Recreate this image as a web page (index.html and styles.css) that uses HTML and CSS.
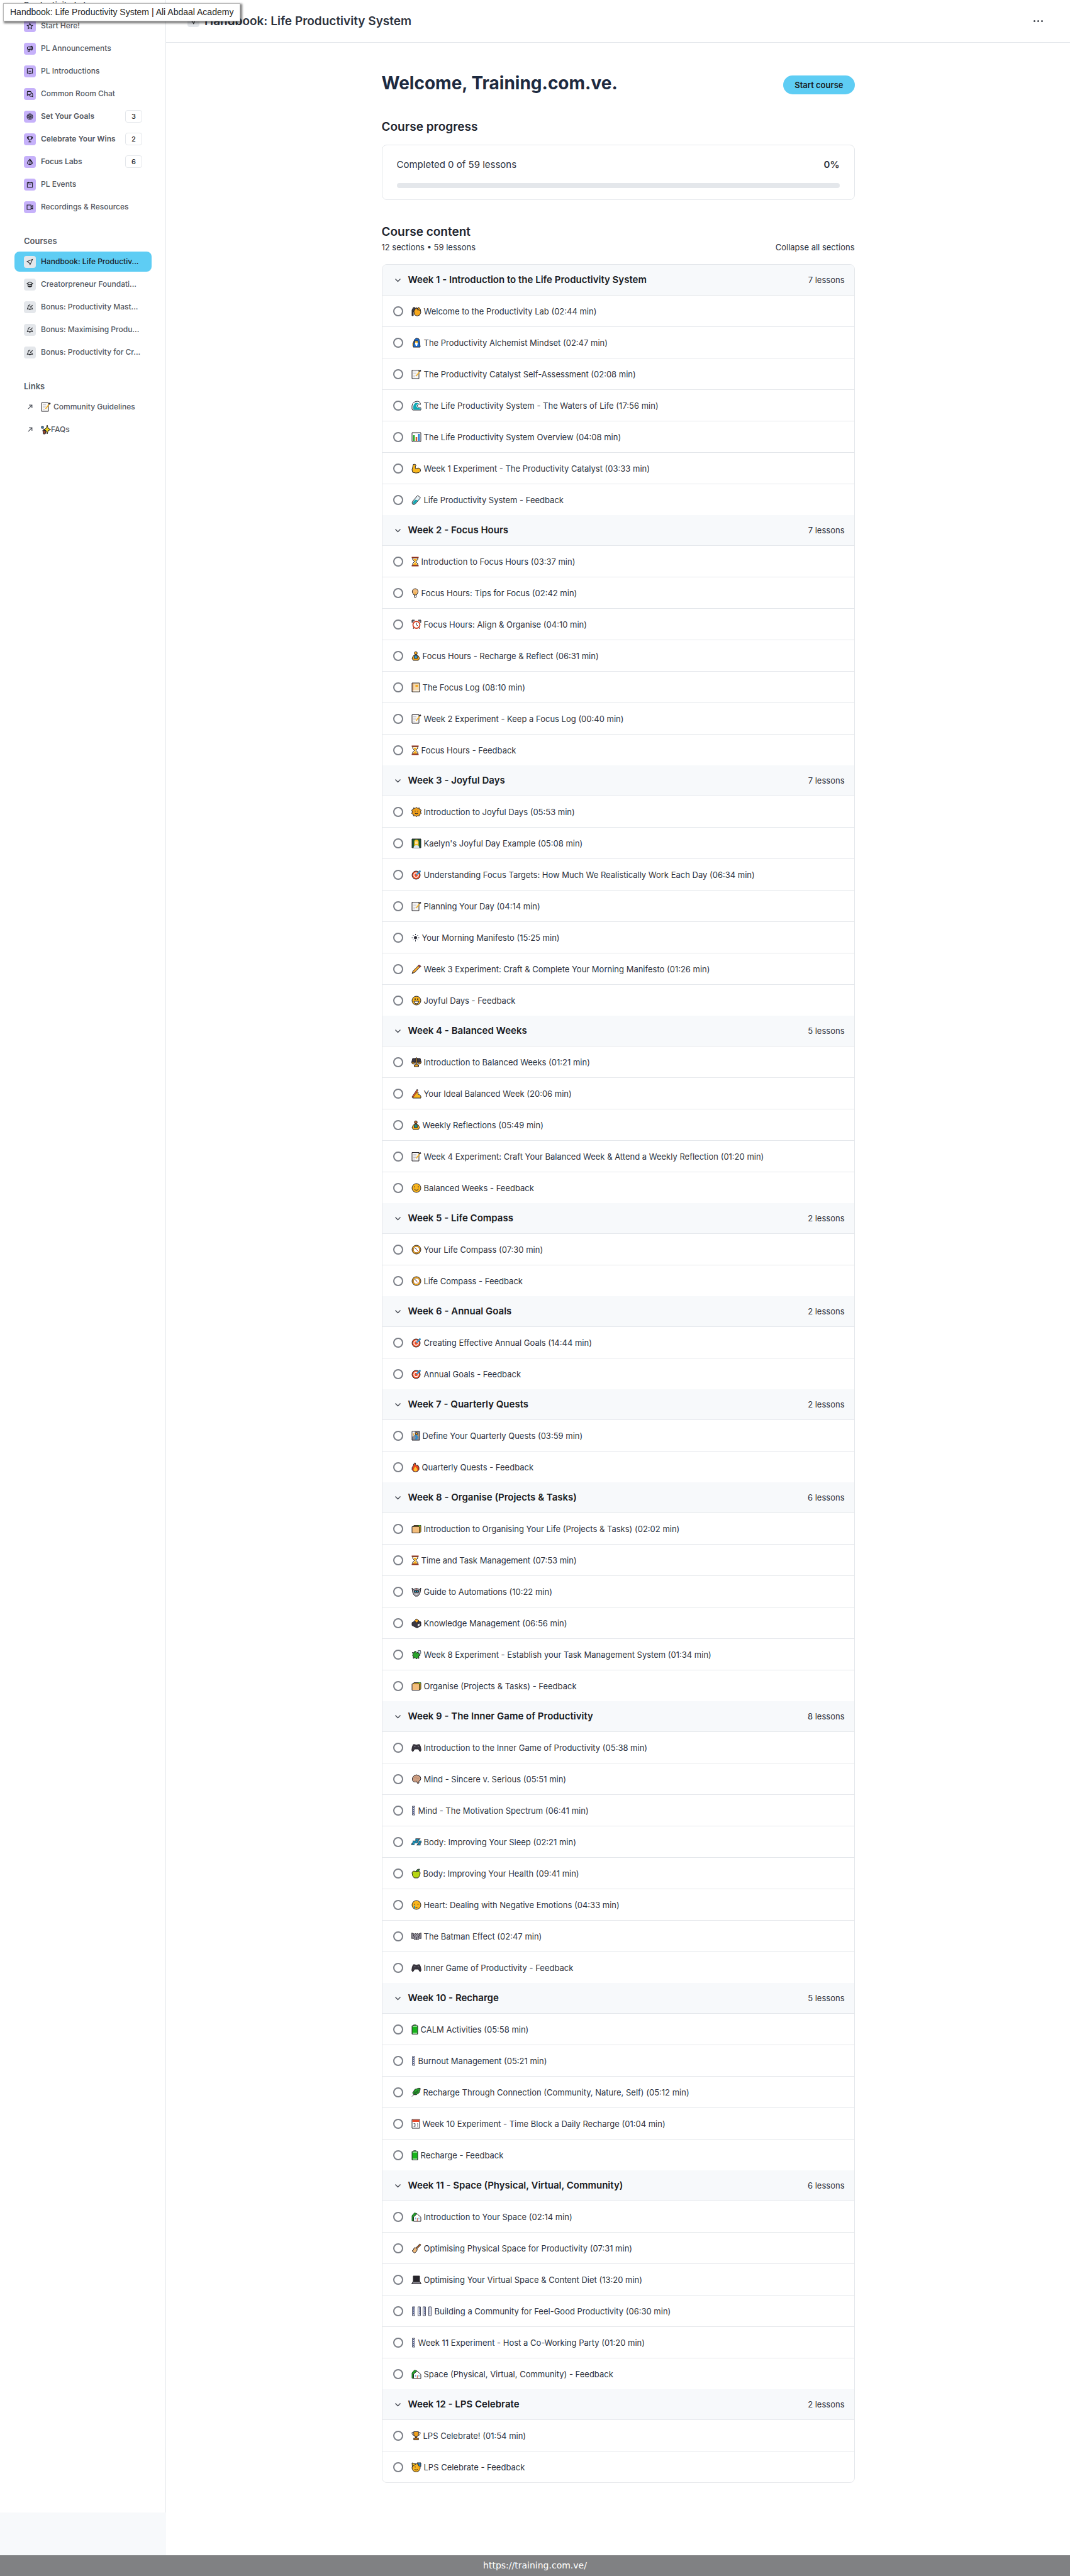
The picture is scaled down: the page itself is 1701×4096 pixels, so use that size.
FILE: index.html
```html
<!DOCTYPE html>
<html lang="en">
<head>
<meta charset="utf-8">
<title>Handbook: Life Productivity System | Ali Abdaal Academy</title>
<link rel="stylesheet" href="styles.css">
</head>
<body>
<svg class="sprite" aria-hidden="true">
<symbol id="i-star" viewBox="0 0 16 16"><path d="M8 1.800l1.900 4 4.300.6-3.100 3 .8 4.400L8 11.700l-3.900 2.100.8-4.400-3.100-3 4.300-.6z"/></symbol>
<symbol id="i-mega" viewBox="0 0 16 16"><path d="M8.500 3.500H5a3 3 0 000 6h3.500zM8.500 3.500l3-1.700q2.500.2 2.500 4.700t-2.500 4.700l-3-1.700M4 9.700v4h3v-4M11.500 2v9"/></symbol>
<symbol id="i-note" viewBox="0 0 16 16"><path d="M2 2h12v10H9.500L8 14l-1.500-2H2zM5 7.500h6"/></symbol>
<symbol id="i-chat" viewBox="0 0 16 16"><path d="M3 2h5q3 0 3 3t-3 4.500H5L2 11V4q0-2 1-2zM11.500 5.500q3 .5 3 3.500v5l-2.500-1H9q-2.500 0-3-3"/></symbol>
<symbol id="i-target" viewBox="0 0 16 16"><circle cx="8" cy="8" r="6.500"/><circle cx="8" cy="8" r="4"/><circle cx="8" cy="8" r="1.500"/></symbol>
<symbol id="i-cup" viewBox="0 0 16 16"><path d="M4.500 1.500h7V6q0 3.500-3.500 3.500T4.500 6zM4.500 3H2q0 4 3 4.500M11.500 3H14q0 4-3 4.500M8 9.500v4M5 14h6"/></symbol>
<symbol id="i-lab" viewBox="0 0 16 16"><path d="M8 1.500L3.500 7 2 11q2 3 6 3t6-3l-1.500-4zM8 1.500V14M8 3l2.500 4v7"/></symbol>
<symbol id="i-cal" viewBox="0 0 16 16"><path d="M2 3.500h12V14H2zM5 1.500v3.500M11 1.500v3.500M5 7h6"/></symbol>
<symbol id="i-video" viewBox="0 0 16 16"><path d="M1.500 3h9v10h-9zM10.500 7l4-3v8l-4-3z"/></symbol>
<symbol id="i-plane" viewBox="0 0 16 16"><path d="M14 2L1.500 7l4.500 2.500L8.500 14z"/></symbol>
<symbol id="i-grad" viewBox="0 0 16 16"><path d="M8 2L1.500 5.500 8 9l6.500-3.500zM3.500 7v4.500Q8 15.500 12.500 11.500V7M5 11q3 2.500 6 0"/></symbol>
<symbol id="i-bell" viewBox="0 0 16 16"><path d="M9 2.500Q4 2.500 4 7.500L2 12h12l-1.500-3.500M6.500 12.500Q8 15 9.500 12.500M8 6l2 2 4-5"/></symbol>
<symbol id="i-out" viewBox="0 0 16 16"><path d="M3 13L12 4M5 3.500h7.500V11"/></symbol>
<symbol id="i-chev" viewBox="0 0 15 15"><path d="M3.500 5.500l4 4 4-4"/></symbol>

<symbol id="clap" viewBox="0 0 16 16"><path fill="#3d3d45" d="M3 2h3v3L3 9v6H1V6z"/><path fill="#f7a81b" d="M4 8l3-5 1.500-1L10 4l1.500-2.500L14 4l1 6-2 4-4 1.500-4-2z"/><path d="M8 3l3 4M10 3l3 4"/></symbol>
<symbol id="mage" viewBox="0 0 16 16"><path fill="#1b6ed1" d="M3 15V8l2-5 3-2.500L12 2l1 4 1 9z"/><path fill="#ffc83d" d="M5.500 5h5v4h-5z"/><path fill="#fff" stroke="none" d="M5.500 8h5l-1.500 5H7z"/><path stroke="#f7a81b" d="M2 8v5"/></symbol>
<symbol id="memo" viewBox="0 0 16 16"><path fill="#f8f7f5" d="M1 1.500h11v13.500H1z"/><path stroke="#c4c1c9" d="M3 4.500h5M3 7h5M3 9.500h4M3 12h3"/><path stroke="#f0b02c" stroke-width="1.800" d="M7.500 11L13 4"/><path stroke-width="2.400" d="M12.500 3.500L15 2"/></symbol>
<symbol id="wave" viewBox="0 0 16 16"><path fill="#fff" d="M1 13Q-.5 2 9 1q5 0 5.500 5-4-1.500-5 2 0 3 5.500 3.500V15H2z"/><path fill="#10a9b5" stroke="none" d="M3 13q-1-7 4-9.500Q11 3 12 5q-4 0-4 4 1 3 6.500 3.500v2H4z"/></symbol>
<symbol id="chart" viewBox="0 0 16 16"><path fill="#fff" d="M1 1h14v14H1z"/><path stroke="#18a51c" stroke-width="2.500" d="M4 14V5"/><path stroke="#d05b24" stroke-width="2.500" d="M8 14V8"/><path stroke="#1b77d2" stroke-width="2.500" d="M12 14V3"/></symbol>
<symbol id="arm" viewBox="0 0 16 16"><path fill="#f9b81e" d="M3 1.500q3-1 4.500 1L6 5.500l1 3q4-3 7 0 2 4-2 6-5 1.500-10-.5-2-4 0-8z"/></symbol>
<symbol id="tube" viewBox="0 0 16 16"><path fill="#e7f3f8" d="M10 .8l4.500 3.700-8 9.500q-2.500 2.500-4.500.8t0-4.800z"/><path fill="#12a5b0" stroke="none" d="M6 7.500l4.500 1-4.500 5q-2 1.500-3.200.5-.8-2 .7-4z"/></symbol>
<symbol id="glass" viewBox="0 0 12 16"><path fill="#fff5dc" d="M2 2h8v3L7 8l3 3v3H2v-3l3-3-3-3z"/><path fill="#f9b11b" stroke="none" d="M3 4h6L6.500 7.500v2L9 12v1.500H3V12l2.500-2.500v-2z"/><path stroke="#8c2e1a" stroke-width="2" d="M.5 1.500h11M.5 14.500h11"/></symbol>
<symbol id="bulb" viewBox="0 0 12 16"><path fill="#f3bd7b" d="M4 11L1.500 7q-1-5 4.500-6 5.500 1 4.500 6L8 11z"/><path fill="#fff" d="M4.500 11h3v3.500l-1.500 1-1.500-1z"/><path stroke="#f7a81b" d="M6 6v5"/></symbol>
<symbol id="alarm" viewBox="0 0 16 16"><path fill="#9a97a0" d="M1 5V1h4zM15 5V1h-4zM3 15l1-3M13 15l-1-3"/><circle cx="8" cy="8.500" r="5.500" fill="#fff" stroke="#d23d1d" stroke-width="1.800"/><path d="M8 5v3.500l2 1.500"/></symbol>
<symbol id="yoga" viewBox="0 0 14 16"><path fill="#f7a81b" d="M7 5L3 8l-2 4 2 3h8l2-3-2-4z"/><path fill="#2f9fd4" d="M5 7h4l.5 5h-5z"/><circle cx="7" cy="3.500" r="2.300" fill="#f7a81b"/></symbol>
<symbol id="yoga2" viewBox="0 0 14 16"><path fill="#f9b11b" d="M7 5L3 8l-2 4 2 3h8l2-3-2-4z"/><path fill="#17988c" d="M5 7h4l.5 5h-5z"/><circle cx="7" cy="3.500" r="2.300" fill="#c06a27"/></symbol>
<symbol id="book" viewBox="0 0 14 16"><path fill="#f6d9ab" d="M1 1h12v14H1z"/><path stroke="#b9531b" d="M2.500 1v12"/><path fill="#f9a81b" stroke="none" d="M6.500 4h4v3h-4z"/><path stroke="#fff" stroke-width="1.500" d="M3 13.500h9"/></symbol>
<symbol id="sunface" viewBox="0 0 16 16"><path fill="#f0a01c" d="M8 .5l2 2 2.500-1 .5 2.500 2.500 1-1 3 1 2.500-2.500 1.500-.5 2.500-2.500-.5L8 15.500l-2-1.500-2.500.5L3 12 .5 10.500l1-2.500-1-3L3 4l.5-2.500 2.500 1z"/><path d="M6 6v1.500M10 6v1.500M5.500 10q2.500 2 5 0"/></symbol>
<symbol id="teacher" viewBox="0 0 16 16"><path fill="#1d5a33" d="M1 1h14v14H1z"/><path fill="#f9c51e" stroke="none" d="M4.500 12V5Q5 2 8 2t3.500 3v7z"/><path fill="#ffe0a8" stroke="none" d="M6 5h4v4H6z"/><path fill="#dbe9f6" stroke="none" d="M3.500 15q0-4 4.500-4t4.500 4z"/></symbol>
<symbol id="dart" viewBox="0 0 16 16"><circle cx="7.500" cy="8.500" r="6.500" fill="#ef4b22"/><circle cx="7.500" cy="8.500" r="3.500" fill="none" stroke="#fff" stroke-width="1.600"/><path stroke="#27242b" stroke-width="2.600" d="M10.500 5.500L14 2"/><path stroke="#2d9fe0" stroke-width="1.800" d="M8 8l6.500-6.500"/></symbol>
<symbol id="sun" viewBox="0 0 13 16"><g stroke="#3c4250"><circle cx="6.500" cy="8" r="2.200" fill="#27242b"/><path d="M6.500 2v2M6.500 12v2M.5 8h2M10.500 8h2M2.500 4l1 1M9.500 11l1 1M2.500 12l1-1M9.500 5l1-1"/></g></symbol>
<symbol id="pencil" viewBox="0 0 16 16"><path fill="#f3a62b" d="M1 15l1.500-4L12 1.500l2.500 2L5.500 13z"/><path fill="#d33f4e" d="M11 2.500L12.500 1 15 3.500 13.500 5z"/></symbol>
<symbol id="grin" viewBox="0 0 16 16"><circle cx="8" cy="8" r="7" fill="#f9b51e"/><path stroke-width="1.500" d="M6 4.500v2.500M10 4.500v2.500"/><path fill="#fff" d="M4 9h8q-.5 4-4 4T4 9z"/></symbol>
<symbol id="smile" viewBox="0 0 16 16"><circle cx="8" cy="8" r="7" fill="#f9b51e"/><path d="M4 6.500q1-1.500 2 0M10 6.500q1-1.500 2 0M4.500 9.500q3.500 4 7 0"/></symbol>
<symbol id="scale" viewBox="0 0 16 16"><path fill="#3b3842" d="M2 2h12l1.500 6H.5z"/><path fill="#f7a81b" d="M.5 8h5q-.5 3-2.500 3T.5 8zM10.500 8h5q-.5 3-2.500 3t-2.500-3zM7 1h2v11h2.500v3h-7v-3H7z"/></symbol>
<symbol id="write" viewBox="0 0 16 16"><path fill="#f9b51e" d="M2 14l2-5 3-1 2-3 2 1-.5 3 3 1 1.500 2v3H2z"/><path stroke="#27242b" stroke-width="2.600" d="M1.500 14L10 1.500"/><path stroke="#e2552b" stroke-width="1.600" d="M2 13.500L9.500 2.500"/></symbol>
<symbol id="compass" viewBox="0 0 16 16"><circle cx="8" cy="8" r="7" fill="#f5a81c"/><circle cx="8" cy="8" r="4.800" fill="#fff" stroke="#a9752b"/><path d="M5.500 5.500l3 2"/><path stroke="#d33f26" d="M8 8l2.500 2.500"/></symbol>
<symbol id="climb" viewBox="0 0 14 16"><path fill="#8f8d96" d="M1 1h12v14H1z"/><path fill="#f4f4f4" stroke="none" d="M1.500 1.500h4v5l-4 3z"/><path stroke="#2d8ed0" stroke-width="3" d="M6 7l3 3-2 4"/><circle cx="8" cy="4.500" r="1.800" fill="#f7a81b"/><path stroke="#f7a81b" d="M4 8l-1-4M10 9l2-3"/></symbol>
<symbol id="fire" viewBox="0 0 13 16"><path fill="#e9481f" d="M6 .8q0 3 3 5l1-1.500q3 4 2 7.500-1.500 3.500-5.500 3.500T1 11.500Q.5 8 3 5.500q0-3 3-4.700z"/><path fill="#ffc22d" stroke="none" d="M6 7q3 2.500 3.500 5-.5 2.500-3 2.500T3.500 12Q4 10 6 7z"/></symbol>
<symbol id="files" viewBox="0 0 16 16"><path fill="#f5c11e" d="M2 4.500l2-2h11v10l-2 2z"/><path fill="#29a329" stroke="none" d="M11.500 2h3v1.500h-3z"/><path fill="#f3bd7b" d="M1 4.500h11.500v10H1z"/></symbol>
<symbol id="robot" viewBox="0 0 16 16"><path fill="#a4a4ad" d="M1 2l2 2.500q5-3.500 10 0L15 2l-1 7-2 4-2 2H6l-2-2-2-4z"/><path fill="#26343d" d="M4.500 6h7v3h-7z"/><path stroke="#23b4d9" d="M5.500 7.500h1.500M9 7.500h1.500"/><path stroke="#d33f26" d="M8 3v2"/><path stroke="#fff" d="M6.500 12h3"/></symbol>
<symbol id="ballot" viewBox="0 0 16 16"><path fill="#3b3842" d="M1 7l7-3.500L15 6v6l-6 3.500-8-4z"/><path fill="#f7a81b" d="M5 4l3-3 4 3-4 3.500z"/><path fill="#f4f4f4" stroke="none" d="M10 10l3-1.500v3L10 13z"/></symbol>
<symbol id="puzzle" viewBox="0 0 16 16"><path fill="#2aa52c" d="M1.500 4.500l3 .5q0-3 2-2.500T8 6l2.500-2.500L12 7q2 0 2 1.500t-2.500 1.500l.5 4-2.500-.5L8 15l-2-2.500-3 1.500v-4Q0 9 3 7.500z"/><path fill="#bfe1f3" stroke-width=".7" d="M10.500 1.500h4l.5 4.500-2 .5-2-2z"/></symbol>
<symbol id="pad" viewBox="0 0 16 16"><path fill="#3b3842" d="M3 3h3l1 .8h2l1-.8h3q2 3 2.300 9-.8 3-2.300 1.500L11 10H5l-2 3.500Q1.500 15 .7 12 1 6 3 3z"/><path stroke="#8a8792" d="M4 6.500h2.500M10 6.500h2"/></symbol>
<symbol id="brain" viewBox="0 0 16 16"><path fill="#cfa083" d="M5 2q3-2 6 0 4 1 4 5-.5 4-3 4v3l-2 1-1.500-3Q4 13.500 2 10.500q-2-5 3-8.500z"/><path stroke="#b98a70" d="M4 6q3-2 4 0t4 0M4 9.500h5"/></symbol>
<symbol id="tofu" viewBox="0 0 7 16"><path fill="#e8e9f2" stroke="#4c5064" d="M1.500 1h4v14h-4z"/><path stroke="#3a4a86" stroke-dasharray="2 1" d="M3.500 2v12"/></symbol>
<symbol id="zzz" viewBox="0 0 16 16"><g stroke="#27242b" stroke-width="3.500"><path d="M2 7.500h3L2 11h3M6.500 4h4L6.500 8h4M11.500 7.500h3l-3 4h3"/></g><g stroke="#19a3cf" stroke-width="1.500"><path d="M2 7.500h3L2 11h3M6.500 4h4L6.500 8h4M11.500 7.500h3l-3 4h3"/></g></symbol>
<symbol id="apple" viewBox="0 0 15 16"><path fill="#b6d612" d="M7.500 5Q2 2.500 1 7q0 5 3.500 8h6Q14 12 14 7q-1-4.500-6.500-2z"/><path fill="#2aa52c" d="M7.500 4.500Q8 1 13 1q0 4-5.500 3.500z"/></symbol>
<symbol id="cry" viewBox="0 0 16 16"><circle cx="8" cy="8" r="7" fill="#f9b51e"/><path d="M5.500 6v2M10.500 6v2M6.500 12q1.500-1.500 3 0"/><path stroke="#1c97c4" stroke-width="2" d="M5 9.500v4"/></symbol>
<symbol id="bat" viewBox="0 0 16 16"><path fill="#96939e" d="M.7 2.500L5 4.500 6.500 3 8 5l1.500-2L11 4.500l4.300-2v9L13 10.500 11 13l-1.500-.5L8 14l-1.500-1.500L5 13l-2-2.500-2.300 1z"/><path d="M3 5l2 5M13 5l-2 5M6.500 7h.5M9 7h.5M8 9v3"/></symbol>
<symbol id="battery" viewBox="0 0 11 16"><path fill="#18b51b" d="M3.500.8h4V2H10v13.300H1V2h2.500z"/><path stroke="#fff" d="M2 3h7M2 14h7"/></symbol>
<symbol id="leaf" viewBox="0 0 16 16"><path fill="#25a52b" d="M3 11Q1 8 4 6q1-4 5-4 3-1.500 6-1 0 3-1 5 0 3-3 4-2 3-6 2z"/><path d="M1 15L12 4M6 9.500V6.500M8.500 7.500h3"/></symbol>
<symbol id="date" viewBox="0 0 14 16"><path fill="#fff" d="M1 1h12v14H1z"/><path fill="#e5492b" stroke="none" d="M1.500 1.500h11V5h-11z"/><path stroke="#77747e" d="M3.500 7.500H6v2.500H4M6 10v2.500H3.500M9 8l1-.5v5.500"/></symbol>
<symbol id="house" viewBox="0 0 16 16"><path fill="#25a52b" stroke="#1c5a24" d="M1 14.500V6l4-4.500L9 3v11.500z"/><path fill="#fff" d="M3.500 15V8L9 3l6 5.500V15z"/><path stroke="#7eb8e0" stroke-width="1.500" d="M6.500 9v3M12 9v3"/><path stroke="#c9472b" d="M9.300 15v-5"/></symbol>
<symbol id="broom" viewBox="0 0 16 16"><path stroke="#27242b" stroke-width="3" d="M8 8l6.500-6.500"/><path stroke="#c9722b" stroke-width="1.300" d="M8 8l6.500-6.500"/><path fill="#f3bd7b" d="M6 6.500L9.500 10 8 13l-3 2.500L1 12q3-1 3-4z"/></symbol>
<symbol id="laptop" viewBox="0 0 16 16"><path fill="#27242b" d="M3 2h10v9H3z"/><path fill="#8f8d96" d="M2.500 11h11l2 3.500H.5z"/></symbol>
<symbol id="trophy" viewBox="0 0 16 16"><path fill="#f0a01c" d="M4 1h8v5q-1 4-4 4T4 6z"/><path d="M4 2.500H1q0 5 4 5M12 2.500h3q0 5-4 5"/><path fill="#c97a18" d="M7 10h2v2h3v3H4v-3h3z"/></symbol>
<symbol id="party" viewBox="0 0 16 16"><circle cx="7.500" cy="9" r="6.500" fill="#f9b51e"/><path fill="#f5c11e" d="M1.500 7L1 1l6 2z"/><path d="M5 8q1-1 2 0M5 11.500q3 2 5 0"/><path fill="#2d8ed0" d="M9 1h6v6l-3-.5-1-3z"/><path stroke="#f7a81b" stroke-width="1.500" d="M9 10l5-3"/></symbol>
<symbol id="sparkle" viewBox="0 0 16 16"><path fill="#2d8ed0" d="M1 3h3v3H1zM3 6l3 3"/><path fill="#a04a2b" d="M3 9l5 1-1 5H4z"/><path fill="#e9d21a" d="M10 1l1.500 5 4 2-4 2-1.500 5-1.500-5-4-2 4-2z"/></symbol>
</svg>

<div class="page">
  <div class="shell">
    <aside class="sidebar">
      <nav class="nav">
        <section class="group">
          <h2 class="group-title">Productivity Lab</h2>
          <ul class="menu">
            <li><a class="item" href="#"><span class="tile lilac"><svg class="line"><use href="#i-star"/></svg></span>Start Here!</a></li>
            <li><a class="item" href="#"><span class="tile lilac"><svg class="line"><use href="#i-mega"/></svg></span>PL Announcements</a></li>
            <li><a class="item" href="#"><span class="tile lilac"><svg class="line"><use href="#i-note"/></svg></span>PL Introductions</a></li>
            <li><a class="item" href="#"><span class="tile lilac"><svg class="line"><use href="#i-chat"/></svg></span>Common Room Chat</a></li>
            <li><a class="item unread" href="#"><span class="tile lilac"><svg class="line"><use href="#i-target"/></svg></span>Set Your Goals<span class="count">3</span></a></li>
            <li><a class="item unread" href="#"><span class="tile lilac"><svg class="line"><use href="#i-cup"/></svg></span>Celebrate Your Wins<span class="count">2</span></a></li>
            <li><a class="item unread" href="#"><span class="tile lilac"><svg class="line"><use href="#i-lab"/></svg></span>Focus Labs<span class="count">6</span></a></li>
            <li><a class="item" href="#"><span class="tile lilac"><svg class="line"><use href="#i-cal"/></svg></span>PL Events</a></li>
            <li><a class="item" href="#"><span class="tile lilac"><svg class="line"><use href="#i-video"/></svg></span>Recordings &amp; Resources</a></li>
          </ul>
        </section>
        <section class="group">
          <h2 class="group-title">Courses</h2>
          <ul class="menu">
            <li><a class="item active" href="#"><span class="tile"><svg class="line"><use href="#i-plane"/></svg></span>Handbook: Life Productiv...</a></li>
            <li><a class="item" href="#"><span class="tile"><svg class="line"><use href="#i-grad"/></svg></span>Creatorpreneur Foundati...</a></li>
            <li><a class="item" href="#"><span class="tile"><svg class="line"><use href="#i-bell"/></svg></span>Bonus: Productivity Mast...</a></li>
            <li><a class="item" href="#"><span class="tile"><svg class="line"><use href="#i-bell"/></svg></span>Bonus: Maximising Produ...</a></li>
            <li><a class="item" href="#"><span class="tile"><svg class="line"><use href="#i-bell"/></svg></span>Bonus: Productivity for Cr...</a></li>
          </ul>
        </section>
        <section class="group">
          <h2 class="group-title">Links</h2>
          <ul class="menu">
            <li><a class="item" href="#"><span class="tile plain"><svg class="line out"><use href="#i-out"/></svg></span><svg class="emoji" width="16"><use href="#memo"/></svg>Community Guidelines</a></li>
            <li><a class="item" href="#"><span class="tile plain"><svg class="line out"><use href="#i-out"/></svg></span><svg class="emoji snug" width="16"><use href="#sparkle"/></svg>FAQs</a></li>
          </ul>
        </section>
      </nav>
      <div class="sidebar-foot"></div>
    </aside>

    <main class="main">
      <header class="topbar">
        <span class="tile"><svg class="line"><use href="#i-plane"/></svg></span>
        <h1 class="topbar-title">Handbook: Life Productivity System</h1>
        <button class="more" type="button" aria-label="More options"><i></i><i></i><i></i></button>
      </header>

      <div class="content">
        <div class="welcome">
          <h2 class="welcome-title">Welcome, Training.com.ve.</h2>
          <button class="start" type="button">Start course</button>
        </div>

        <h3 class="heading">Course progress</h3>
        <div class="progress-card">
          <div class="progress-row"><span>Completed 0 of 59 lessons</span><strong>0%</strong></div>
          <div class="bar" role="progressbar" aria-valuenow="0" aria-valuemin="0" aria-valuemax="100" aria-label="Course progress"></div>
        </div>

        <h3 class="heading">Course content</h3>
        <div class="summary"><span>12 sections • 59 lessons</span><button class="collapse" type="button">Collapse all sections</button></div>

        <div class="outline">
          <section class="week">
            <button class="week-head" type="button"><svg class="chev"><use href="#i-chev"/></svg><span class="week-name">Week 1 - Introduction to the Life Productivity System</span><span>7 lessons</span></button>
            <ul class="lessons">
              <li><label class="lesson"><input type="checkbox"><svg class="emoji" width="16"><use href="#clap"/></svg>Welcome to the Productivity Lab (02:44 min)</label></li>
              <li><label class="lesson"><input type="checkbox"><svg class="emoji" width="16"><use href="#mage"/></svg>The Productivity Alchemist Mindset (02:47 min)</label></li>
              <li><label class="lesson"><input type="checkbox"><svg class="emoji" width="16"><use href="#memo"/></svg>The Productivity Catalyst Self-Assessment (02:08 min)</label></li>
              <li><label class="lesson"><input type="checkbox"><svg class="emoji" width="16"><use href="#wave"/></svg>The Life Productivity System - The Waters of Life (17:56 min)</label></li>
              <li><label class="lesson"><input type="checkbox"><svg class="emoji" width="16"><use href="#chart"/></svg>The Life Productivity System Overview (04:08 min)</label></li>
              <li><label class="lesson"><input type="checkbox"><svg class="emoji" width="16"><use href="#arm"/></svg>Week 1 Experiment - The Productivity Catalyst (03:33 min)</label></li>
              <li><label class="lesson"><input type="checkbox"><svg class="emoji" width="16"><use href="#tube"/></svg>Life Productivity System - Feedback</label></li>
            </ul>
          </section>
          <section class="week">
            <button class="week-head" type="button"><svg class="chev"><use href="#i-chev"/></svg><span class="week-name">Week 2 - Focus Hours</span><span>7 lessons</span></button>
            <ul class="lessons">
              <li><label class="lesson"><input type="checkbox"><svg class="emoji" width="12"><use href="#glass"/></svg>Introduction to Focus Hours (03:37 min)</label></li>
              <li><label class="lesson"><input type="checkbox"><svg class="emoji" width="12"><use href="#bulb"/></svg>Focus Hours: Tips for Focus (02:42 min)</label></li>
              <li><label class="lesson"><input type="checkbox"><svg class="emoji" width="16"><use href="#alarm"/></svg>Focus Hours: Align &amp; Organise (04:10 min)</label></li>
              <li><label class="lesson"><input type="checkbox"><svg class="emoji" width="14"><use href="#yoga"/></svg>Focus Hours - Recharge &amp; Reflect (06:31 min)</label></li>
              <li><label class="lesson"><input type="checkbox"><svg class="emoji" width="14"><use href="#book"/></svg>The Focus Log (08:10 min)</label></li>
              <li><label class="lesson"><input type="checkbox"><svg class="emoji" width="16"><use href="#memo"/></svg>Week 2 Experiment - Keep a Focus Log (00:40 min)</label></li>
              <li><label class="lesson"><input type="checkbox"><svg class="emoji" width="12"><use href="#glass"/></svg>Focus Hours - Feedback</label></li>
            </ul>
          </section>
          <section class="week">
            <button class="week-head" type="button"><svg class="chev"><use href="#i-chev"/></svg><span class="week-name">Week 3 - Joyful Days</span><span>7 lessons</span></button>
            <ul class="lessons">
              <li><label class="lesson"><input type="checkbox"><svg class="emoji" width="16"><use href="#sunface"/></svg>Introduction to Joyful Days (05:53 min)</label></li>
              <li><label class="lesson"><input type="checkbox"><svg class="emoji" width="16"><use href="#teacher"/></svg>Kaelyn's Joyful Day Example (05:08 min)</label></li>
              <li><label class="lesson"><input type="checkbox"><svg class="emoji" width="16"><use href="#dart"/></svg>Understanding Focus Targets: How Much We Realistically Work Each Day (06:34 min)</label></li>
              <li><label class="lesson"><input type="checkbox"><svg class="emoji" width="16"><use href="#memo"/></svg>Planning Your Day (04:14 min)</label></li>
              <li><label class="lesson"><input type="checkbox"><svg class="emoji" width="13"><use href="#sun"/></svg>Your Morning Manifesto (15:25 min)</label></li>
              <li><label class="lesson"><input type="checkbox"><svg class="emoji" width="16"><use href="#pencil"/></svg>Week 3 Experiment: Craft &amp; Complete Your Morning Manifesto (01:26 min)</label></li>
              <li><label class="lesson"><input type="checkbox"><svg class="emoji" width="16"><use href="#grin"/></svg>Joyful Days - Feedback</label></li>
            </ul>
          </section>
          <section class="week">
            <button class="week-head" type="button"><svg class="chev"><use href="#i-chev"/></svg><span class="week-name">Week 4 - Balanced Weeks</span><span>5 lessons</span></button>
            <ul class="lessons">
              <li><label class="lesson"><input type="checkbox"><svg class="emoji" width="16"><use href="#scale"/></svg>Introduction to Balanced Weeks (01:21 min)</label></li>
              <li><label class="lesson"><input type="checkbox"><svg class="emoji" width="16"><use href="#write"/></svg>Your Ideal Balanced Week (20:06 min)</label></li>
              <li><label class="lesson"><input type="checkbox"><svg class="emoji" width="14"><use href="#yoga2"/></svg>Weekly Reflections (05:49 min)</label></li>
              <li><label class="lesson"><input type="checkbox"><svg class="emoji" width="16"><use href="#memo"/></svg>Week 4 Experiment: Craft Your Balanced Week &amp; Attend a Weekly Reflection (01:20 min)</label></li>
              <li><label class="lesson"><input type="checkbox"><svg class="emoji" width="16"><use href="#smile"/></svg>Balanced Weeks - Feedback</label></li>
            </ul>
          </section>
          <section class="week">
            <button class="week-head" type="button"><svg class="chev"><use href="#i-chev"/></svg><span class="week-name">Week 5 - Life Compass</span><span>2 lessons</span></button>
            <ul class="lessons">
              <li><label class="lesson"><input type="checkbox"><svg class="emoji" width="16"><use href="#compass"/></svg>Your Life Compass (07:30 min)</label></li>
              <li><label class="lesson"><input type="checkbox"><svg class="emoji" width="16"><use href="#compass"/></svg>Life Compass - Feedback</label></li>
            </ul>
          </section>
          <section class="week">
            <button class="week-head" type="button"><svg class="chev"><use href="#i-chev"/></svg><span class="week-name">Week 6 - Annual Goals</span><span>2 lessons</span></button>
            <ul class="lessons">
              <li><label class="lesson"><input type="checkbox"><svg class="emoji" width="16"><use href="#dart"/></svg>Creating Effective Annual Goals (14:44 min)</label></li>
              <li><label class="lesson"><input type="checkbox"><svg class="emoji" width="16"><use href="#dart"/></svg>Annual Goals - Feedback</label></li>
            </ul>
          </section>
          <section class="week">
            <button class="week-head" type="button"><svg class="chev"><use href="#i-chev"/></svg><span class="week-name">Week 7 - Quarterly Quests</span><span>2 lessons</span></button>
            <ul class="lessons">
              <li><label class="lesson"><input type="checkbox"><svg class="emoji" width="14"><use href="#climb"/></svg>Define Your Quarterly Quests (03:59 min)</label></li>
              <li><label class="lesson"><input type="checkbox"><svg class="emoji" width="13"><use href="#fire"/></svg>Quarterly Quests - Feedback</label></li>
            </ul>
          </section>
          <section class="week">
            <button class="week-head" type="button"><svg class="chev"><use href="#i-chev"/></svg><span class="week-name">Week 8 - Organise (Projects &amp; Tasks)</span><span>6 lessons</span></button>
            <ul class="lessons">
              <li><label class="lesson"><input type="checkbox"><svg class="emoji" width="16"><use href="#files"/></svg>Introduction to Organising Your Life (Projects &amp; Tasks) (02:02 min)</label></li>
              <li><label class="lesson"><input type="checkbox"><svg class="emoji" width="12"><use href="#glass"/></svg>Time and Task Management (07:53 min)</label></li>
              <li><label class="lesson"><input type="checkbox"><svg class="emoji" width="16"><use href="#robot"/></svg>Guide to Automations (10:22 min)</label></li>
              <li><label class="lesson"><input type="checkbox"><svg class="emoji" width="16"><use href="#ballot"/></svg>Knowledge Management (06:56 min)</label></li>
              <li><label class="lesson"><input type="checkbox"><svg class="emoji" width="16"><use href="#puzzle"/></svg>Week 8 Experiment - Establish your Task Management System (01:34 min)</label></li>
              <li><label class="lesson"><input type="checkbox"><svg class="emoji" width="16"><use href="#files"/></svg>Organise (Projects &amp; Tasks) - Feedback</label></li>
            </ul>
          </section>
          <section class="week">
            <button class="week-head" type="button"><svg class="chev"><use href="#i-chev"/></svg><span class="week-name">Week 9 - The Inner Game of Productivity</span><span>8 lessons</span></button>
            <ul class="lessons">
              <li><label class="lesson"><input type="checkbox"><svg class="emoji" width="16"><use href="#pad"/></svg>Introduction to the Inner Game of Productivity (05:38 min)</label></li>
              <li><label class="lesson"><input type="checkbox"><svg class="emoji" width="16"><use href="#brain"/></svg>Mind - Sincere v. Serious (05:51 min)</label></li>
              <li><label class="lesson"><input type="checkbox"><svg class="emoji" width="7"><use href="#tofu"/></svg>Mind - The Motivation Spectrum (06:41 min)</label></li>
              <li><label class="lesson"><input type="checkbox"><svg class="emoji" width="16"><use href="#zzz"/></svg>Body: Improving Your Sleep (02:21 min)</label></li>
              <li><label class="lesson"><input type="checkbox"><svg class="emoji" width="15"><use href="#apple"/></svg>Body: Improving Your Health (09:41 min)</label></li>
              <li><label class="lesson"><input type="checkbox"><svg class="emoji" width="16"><use href="#cry"/></svg>Heart: Dealing with Negative Emotions (04:33 min)</label></li>
              <li><label class="lesson"><input type="checkbox"><svg class="emoji" width="16"><use href="#bat"/></svg>The Batman Effect (02:47 min)</label></li>
              <li><label class="lesson"><input type="checkbox"><svg class="emoji" width="16"><use href="#pad"/></svg>Inner Game of Productivity - Feedback</label></li>
            </ul>
          </section>
          <section class="week">
            <button class="week-head" type="button"><svg class="chev"><use href="#i-chev"/></svg><span class="week-name">Week 10 - Recharge</span><span>5 lessons</span></button>
            <ul class="lessons">
              <li><label class="lesson"><input type="checkbox"><svg class="emoji" width="11"><use href="#battery"/></svg>CALM Activities (05:58 min)</label></li>
              <li><label class="lesson"><input type="checkbox"><svg class="emoji" width="7"><use href="#tofu"/></svg>Burnout Management (05:21 min)</label></li>
              <li><label class="lesson"><input type="checkbox"><svg class="emoji" width="15"><use href="#leaf"/></svg>Recharge Through Connection (Community, Nature, Self) (05:12 min)</label></li>
              <li><label class="lesson"><input type="checkbox"><svg class="emoji" width="14"><use href="#date"/></svg>Week 10 Experiment - Time Block a Daily Recharge (01:04 min)</label></li>
              <li><label class="lesson"><input type="checkbox"><svg class="emoji" width="11"><use href="#battery"/></svg>Recharge - Feedback</label></li>
            </ul>
          </section>
          <section class="week">
            <button class="week-head" type="button"><svg class="chev"><use href="#i-chev"/></svg><span class="week-name">Week 11 - Space (Physical, Virtual, Community)</span><span>6 lessons</span></button>
            <ul class="lessons">
              <li><label class="lesson"><input type="checkbox"><svg class="emoji" width="16"><use href="#house"/></svg>Introduction to Your Space (02:14 min)</label></li>
              <li><label class="lesson"><input type="checkbox"><svg class="emoji" width="16"><use href="#broom"/></svg>Optimising Physical Space for Productivity (07:31 min)</label></li>
              <li><label class="lesson"><input type="checkbox"><svg class="emoji" width="16"><use href="#laptop"/></svg>Optimising Your Virtual Space &amp; Content Diet (13:20 min)</label></li>
              <li><label class="lesson"><input type="checkbox"><svg class="emoji" width="33"><use href="#tofu" x="0" width="7" height="16"/><use href="#tofu" x="9" width="7" height="16"/><use href="#tofu" x="17" width="7" height="16"/><use href="#tofu" x="26" width="7" height="16"/></svg>Building a Community for Feel-Good Productivity (06:30 min)</label></li>
              <li><label class="lesson"><input type="checkbox"><svg class="emoji" width="7"><use href="#tofu"/></svg>Week 11 Experiment - Host a Co-Working Party (01:20 min)</label></li>
              <li><label class="lesson"><input type="checkbox"><svg class="emoji" width="16"><use href="#house"/></svg>Space (Physical, Virtual, Community) - Feedback</label></li>
            </ul>
          </section>
          <section class="week">
            <button class="week-head" type="button"><svg class="chev"><use href="#i-chev"/></svg><span class="week-name">Week 12 - LPS Celebrate</span><span>2 lessons</span></button>
            <ul class="lessons">
              <li><label class="lesson"><input type="checkbox"><svg class="emoji" width="15"><use href="#trophy"/></svg>LPS Celebrate! (01:54 min)</label></li>
              <li><label class="lesson"><input type="checkbox"><svg class="emoji" width="16"><use href="#party"/></svg>LPS Celebrate - Feedback</label></li>
            </ul>
          </section>
        </div>
      </div>
    </main>
  </div>
  <footer class="site-foot"><a href="https://training.com.ve/">https://training.com.ve/</a></footer>
  <div class="tooltip" role="tooltip">Handbook: Life Productivity System | Ali Abdaal Academy</div>
</div>
</body>
</html>
```
FILE: styles.css
```css
* { box-sizing: border-box; }

body {
  margin: 0;
  background: #fff;
  color: #2d323d;
  font: 400 13px/20px Inter, "Liberation Sans", sans-serif;
}

h1, h2, h3, ul { margin: 0; padding: 0; }
ul { list-style: none; }
a { color: inherit; text-decoration: none; }
button { border: 0; padding: 0; background: none; color: inherit; font: inherit; text-align: left; }

.sprite { position: absolute; width: 0; height: 0; }

.page {
  position: relative;
  min-height: 100vh;
  display: flex;
  flex-direction: column;
}
.shell { flex: 1; display: grid; grid-template-columns: 264px 1fr; }

/* Sidebar */
.sidebar { display: flex; flex-direction: column; }
.nav { flex: 1; border-right: 1px solid #e4e7eb; padding: 0 22px 0 23px; }
.sidebar-foot { height: 68px; background: #f7f9fb; }
.group { margin-bottom: 30px; }
.group-title {
  padding-left: 15px;
  margin-bottom: 9px;
  color: #545861;
  font-size: 13px;
  font-weight: 600;
  line-height: 16px;
}
.menu { display: flex; flex-direction: column; gap: 4px; }
.item {
  display: flex;
  align-items: center;
  height: 32px;
  padding: 0 15px;
  border-radius: 8px;
  color: #545861;
  font-size: 12px;
  font-weight: 500;
  white-space: nowrap;
}
.item.unread { font-weight: 600; }
.item.active { background: #5ecdf4; color: #191b1f; }
.tile {
  flex: none;
  width: 19px;
  height: 19px;
  margin-right: 8px;
  border-radius: 4px;
  background: #e4e7eb;
  display: grid;
  place-items: center;
}
.tile.lilac { background: #c6b1fa; }
.tile.plain { background: none; }
.line {
  width: 11px;
  height: 11px;
  fill: none;
  stroke: #191b1f;
  stroke-width: 1.5;
}
.line.out { width: 10px; height: 10px; stroke: #545861; stroke-width: 2; }
.count {
  margin-left: auto;
  width: 27px;
  height: 20px;
  border: 1px solid #e4e7eb;
  border-radius: 4px;
  color: #191b1f;
  font-size: 11px;
  font-weight: 500;
  line-height: 18px;
  text-align: center;
}

/* Emoji drawings: dark outline round flat colour */
.emoji {
  flex: none;
  height: 16px;
  margin-right: 4px;
  fill: none;
  stroke: #27242b;
  stroke-width: 1;
}
.emoji.snug { margin-right: 0; }

/* Top bar */
.topbar {
  height: 68px;
  padding: 0 41px 0 34px;
  border-bottom: 1px solid #e4e7eb;
  display: flex;
  align-items: center;
}
.topbar-title { font-size: 19px; font-weight: 600; line-height: 24px; }
.more { margin-left: auto; display: flex; gap: 3px; padding: 8px 2px; }
.more i { width: 3px; height: 3px; border-radius: 50%; background: #42464f; }

/* Course page */
.content { max-width: 752px; margin: 0 auto; padding: 45px 0 68px; }
.welcome { display: flex; align-items: center; justify-content: space-between; height: 44px; margin-bottom: 33px; }
.welcome-title { padding-bottom: 6px; color: #1d2a40; font-size: 28px; font-weight: 700; line-height: 36px; }
.start {
  height: 30px;
  padding: 0 18px;
  border-radius: 15px;
  background: #5ecdf4;
  color: #191b1f;
  font-weight: 600;
}
.heading { color: #1f2630; font-size: 19px; font-weight: 600; line-height: 24px; }
.progress-card {
  margin: 16px 0 39px;
  padding: 21px 23px 18px;
  border: 1px solid #e4e7eb;
  border-radius: 8px;
}
.progress-row {
  display: flex;
  justify-content: space-between;
  margin-bottom: 19px;
  font-size: 15px;
}
.progress-row strong { font-weight: 600; }
.bar { height: 8px; border-radius: 4px; background: #e4e7eb; }
.summary { display: flex; justify-content: space-between; margin: 2px 0 17px; }

/* Outline of weeks and lessons */
.outline { border: 1px solid #e4e7eb; border-radius: 8px; overflow: hidden; }
.week-head {
  width: 100%;
  height: 49px;
  padding: 0 15px 0 17px;
  border-bottom: 1px solid #e4e7eb;
  background: #f7f9fb;
  display: flex;
  align-items: center;
}
.chev { width: 15px; height: 15px; margin-right: 9px; fill: none; stroke: #42464f; stroke-width: 1.3; }
.week-name { margin-right: auto; color: #191b1f; font-size: 15px; font-weight: 600; }
.lessons li { height: 50px; border-bottom: 1px solid #e4e7eb; }
.lessons li:last-child { height: 49px; border-bottom: 0; }
.lesson { display: flex; align-items: center; height: 49px; padding: 0 17px; }
.lesson input {
  appearance: none;
  flex: none;
  width: 16px;
  height: 16px;
  margin: 0 13px 0 0;
  border: 2px solid #7b7f87;
  border-radius: 50%;
}

/* Address strip */
.site-foot {
  height: 33px;
  background: #808183;
  color: #fff;
  font: 14px/33px "DejaVu Sans", sans-serif;
  text-align: center;
}

/* Browser tooltip, floats over the page corner */
.tooltip {
  position: absolute;
  top: 5px;
  left: 5px;
  padding: 0 10px;
  border: 1px solid #b9b9b9;
  background: #fff;
  box-shadow: 2px 2px 3px 1px rgba(0, 0, 0, 0.5);
  color: #1f1f24;
  font: 14px/27px "Liberation Sans", sans-serif;
  white-space: nowrap;
}
```
